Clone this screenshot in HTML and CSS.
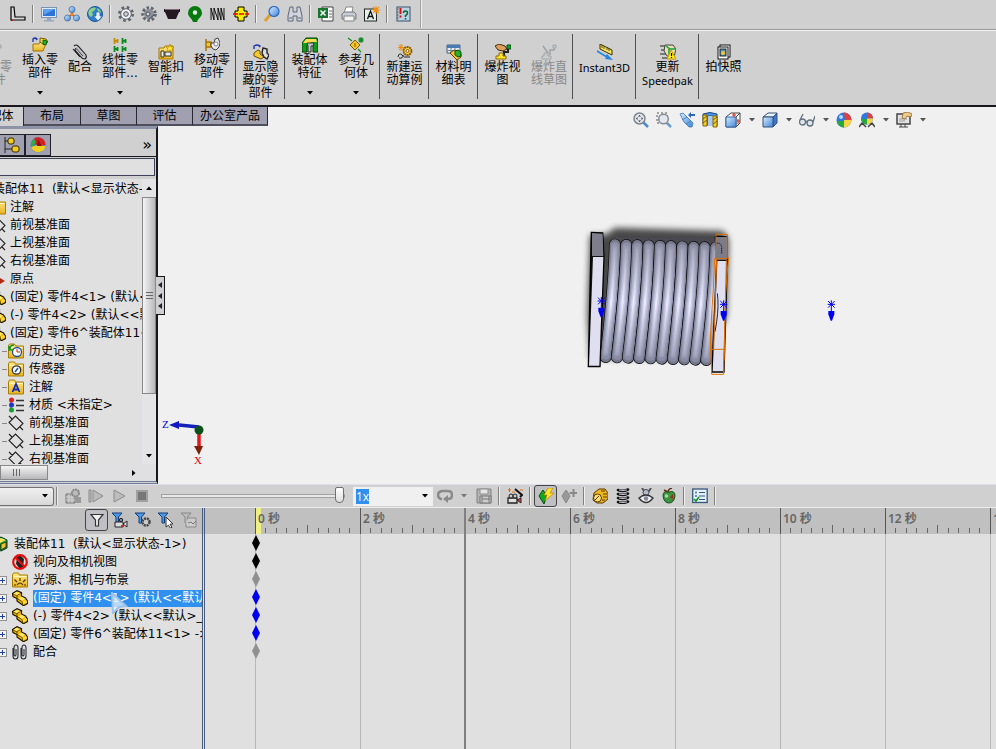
FILE: index.html
```html
<!DOCTYPE html>
<html lang="zh-CN">
<head>
<meta charset="utf-8">
<title>装配体11</title>
<link rel="stylesheet" href="styles.css">
</head>
<body>
<svg class="sprite" aria-hidden="true">
  <defs>
    <linearGradient id="gBlue" x1="0" y1="0" x2="1" y2="1"><stop offset="0" stop-color="#d8ecff"/><stop offset="1" stop-color="#3f84d6"/></linearGradient>
    <linearGradient id="gGold" x1="0" y1="0" x2="0" y2="1"><stop offset="0" stop-color="#ffe98a"/><stop offset="1" stop-color="#e8b420"/></linearGradient>
    <linearGradient id="gGray" x1="0" y1="0" x2="1" y2="1"><stop offset="0" stop-color="#fafafc"/><stop offset="1" stop-color="#8c9098"/></linearGradient>
  </defs>
  <symbol id="dot" viewBox="0 0 16 16"><path d="M7 3l3 2v4l-3 3H3V4z" fill="#000"/></symbol>
  <symbol id="ell" viewBox="0 0 16 16"><path d="M1 1h3l1 10h10v3H1z" fill="#d8d8d8" stroke="#000" stroke-width="1.2"/><path d="M1 14h2v1H1z" fill="#c00"/></symbol>
  <symbol id="monitor" viewBox="0 0 16 16"><rect x=".5" y="1.5" width="15" height="10" fill="#dfe9f7" stroke="#7c92b4"/><rect x="2" y="3" width="12" height="7" fill="#2a74d8"/><path d="M2 3h12L3 9z" fill="#5aa0f0"/><path d="M6 12h4v2H6zM3 14h10v1.500H3z" fill="#98a8c0"/></symbol>
  <symbol id="network" viewBox="0 0 16 16"><path d="M8 5v4M4 11l4-2 4 2" stroke="#444" fill="none"/><g fill="url(#gBlue)" stroke="#3c669c" stroke-width=".8"><circle cx="8" cy="3.500" r="3"/><circle cx="3.500" cy="12" r="3"/><circle cx="12.500" cy="12" r="3"/></g><circle cx="8" cy="8.500" r="1.800" fill="#f08020"/></symbol>
  <symbol id="globe" viewBox="0 0 16 16"><circle cx="8" cy="8" r="7.500" fill="#2e7fd0" stroke="#1a5596"/><path d="M2 4c3-3 6-3 7-2L7 5 5 6l1 3-2 2C1 9 1 7 2 4zM10 2c3 1 4 3 4 5l-3-1z" fill="#8cd080"/><path d="M9 6h4v4h2.500L11 15 6.500 10H9z" fill="#e8f2ff" stroke="#2b62b0" stroke-width=".8"/></symbol>
  <symbol id="gear" viewBox="0 0 16 16"><circle cx="8" cy="8" r="6.500" fill="none" stroke="#60666e" stroke-width="3" stroke-dasharray="2.500 2.600"/><circle cx="8" cy="8" r="5.300" fill="#eef0f2" stroke="#5e646c"/><circle cx="8" cy="8" r="2.300" fill="#d0d0d0" stroke="#50565e"/></symbol>
  <symbol id="geardark" viewBox="0 0 16 16"><circle cx="8" cy="8" r="6" fill="none" stroke="#60646c" stroke-width="3.500" stroke-dasharray="2.400 1.800"/><circle cx="8" cy="8" r="5" fill="#8c9099"/><circle cx="7" cy="8" r="2" fill="#d0d0d0" stroke="#50565e"/><path d="M8 13l5-4" stroke="#44485a"/></symbol>
  <symbol id="pulley" viewBox="0 0 16 16"><path d="M0 3h16v3h-1l-3 7H4L1 6H0z" fill="#221822"/><path d="M1 3h14v1H1z" fill="#806878"/></symbol>
  <symbol id="cam" viewBox="0 0 16 16"><path d="M8 0a7 7 0 0 1 7 7c0 4-4 5-5 9H6c-1-4-5-5-5-9a7 7 0 0 1 7-7z" fill="#067a0c"/><circle cx="8" cy="6.500" r="2.200" fill="#e8e8e8"/></symbol>
  <symbol id="spring" viewBox="0 0 16 16"><path d="M1 14V2l3 12V2l4 12V2l3 12V2l3 12V2" fill="none" stroke="#000" stroke-width=".9"/></symbol>
  <symbol id="cross" viewBox="0 0 16 16"><path d="M5 1h6v4h3v6h-3v4H5v-4H2V5h3z" fill="#f5ec00" stroke="#000"/><path d="M0 8h16" stroke="#e00" stroke-width="1.300" stroke-dasharray="5 1"/></symbol>
  <symbol id="lens" viewBox="0 0 16 16"><path d="M6 9l-5 6" stroke="#e0a030" stroke-width="3"/><circle cx="10" cy="5.500" r="5" fill="url(#gBlue)" stroke="#2b66c0" stroke-width="1.200"/></symbol>
  <symbol id="binoc" viewBox="0 0 16 16"><path d="M3 1h3v5h4V1h3l2 9v5h-5v-5H6v5H1v-5z" fill="#cfd4de" stroke="#5c6474"/><path d="M2 12h3m6 0h3" stroke="#5c6474"/></symbol>
  <symbol id="excel" viewBox="0 0 16 16"><path d="M4 1h11v14H4z" fill="#fff" stroke="#444"/><path d="M11 5h3m-3 3h3m-3 3h3" stroke="#666"/><rect x="0" y="2" width="10" height="10" fill="#16762e"/><path d="M2.500 4.500l5 5m0-5l-5 5" stroke="#fff" stroke-width="1.500"/></symbol>
  <symbol id="printer" viewBox="0 0 16 16"><path d="M5 1h7l-1 6H3z" fill="#fff" stroke="#888"/><path d="M1 8l2-2h10l2 2v5H1z" fill="#c9ccd4" stroke="#70747c"/><path d="M3 10h10v5H3z" fill="#f4f4f4" stroke="#888"/></symbol>
  <symbol id="note" viewBox="0 0 16 16"><rect x=".5" y="3" width="12" height="12" fill="#e4f0ec" stroke="#222"/><path d="M3.500 13l3-8 3 8M4.500 10.500h4" fill="none" stroke="#111" stroke-width="1.300"/><path d="M12 0v8M8 4h8M9 1l6 6m0-6L9 7" stroke="#f09010" stroke-width="1.200"/></symbol>
  <symbol id="help" viewBox="0 0 16 16"><rect x="2" y="1" width="13" height="14" fill="#b9d3e4" stroke="#3c5068"/><path d="M1 3h3M1 6h3M1 9h3M1 12h3" stroke="#777"/><path d="M5.500 2v6m0 1.500v2" stroke="#e01010" stroke-width="2"/><path d="M8.500 7q0-2 2-2t2 2-2 2.500V11m0 1v1.500" fill="none" stroke="#106030" stroke-width="1.500"/></symbol>
  <symbol id="part" viewBox="0 0 16 16"><path d="M.5 3.500L5 .7l4.500 2V6l4 2 2.300 3.500-.3 2-4 2.200L5 11V8.500l-4-2z" fill="#f2bc08" stroke="#1c1400" stroke-width="1.200"/><path d="M1.500 3.500L5 1.700l3.500 1.500L5 5.500z" fill="#ffe768"/><path d="M6.500 8.500l3-1.700 3.500 2L10 11z" fill="#ffe768"/><path d="M10.500 12l3.500-2 1 2-4 2.500z" fill="#ffd83a"/><path d="M5 5.500v3l5 3 1 4M5 5.500l3.500-2M1 4l4 2" fill="none" stroke="#4c3800" stroke-width=".8"/></symbol>
  <symbol id="gpart" viewBox="0 0 16 16"><path d="M1 7h6l1-2h5v4l-2 5H1z" fill="url(#gGold)" stroke="#a07000"/><path d="M8 1l6 1 2 3-4 3-4-3z" fill="#f4d83c" stroke="#775c00"/><path d="M11 3l4 1-1 4-3-1z" fill="#22b422" stroke="#0a600a"/><path d="M1 5V2q2-2 4 0l-1 1" fill="none" stroke="#1830b0" stroke-width="1.300"/></symbol>
  <symbol id="clip" viewBox="0 0 16 16"><path d="M2 2q2-2 4 0l8 9q1 3-1 4-2 0-3-1L3 6q0-2 2-1l6 7M1 5l7 8" fill="none" stroke="#1e1e22" stroke-width="1.100"/><path d="M4 3l9 10" stroke="#b0b4bc" stroke-width="1.200"/></symbol>
  <symbol id="pattern" viewBox="0 0 16 16"><path d="M2.500 1v6M2 4h4M5.500 2v4" stroke="#c88c00" stroke-width="1.800" fill="none"/><path d="M10.500 1v6m0-3h4m-1-2v4M2.500 9v6m0-3h4m-1-2v4M10.500 9v6m0-3h4m-1-2v4" stroke="#0c8c20" stroke-width="1.800" fill="none"/></symbol>
  <symbol id="smart" viewBox="0 0 16 16"><path d="M1 4h5l1-2h8v13H1z" fill="url(#gGold)" stroke="#a87800"/><path d="M3 7h3v6H3zM7 8h6v4H7z" fill="#e8ecf0" stroke="#333"/><path d="M12 0l1.200 3H16l-2 2 1 3-3-2-3 2 1-3-2-2h3z" fill="#ffe640" stroke="#b88000" stroke-width=".7"/></symbol>
  <symbol id="move" viewBox="0 0 16 16"><path d="M2 2v12M2 5h5v5H2" fill="#f6c52a" stroke="#a87400" stroke-width="1.500"/><path d="M7 6h3l1-4 3-1 2 5-1 4-3 3-3-1-2-3z" fill="#e8e8ec" stroke="#444"/><circle cx="12" cy="7" r="2" fill="#fff" stroke="#888"/></symbol>
  <symbol id="showhide" viewBox="0 0 16 16"><path d="M1 5V2q3-2 6 0l-1 1" fill="none" stroke="#1830b0" stroke-width="1.400"/><path d="M1 9l4-3 2 1v3l4 3-3 2-7-3z" fill="#f5cb30" stroke="#6a4c00"/><path d="M10 4l4 1v4l2 2-2 4-3-2-2-4z" fill="#ddd" stroke="#222" stroke-width="1.400"/></symbol>
  <symbol id="feature" viewBox="0 0 16 16"><path d="M0 6l4-5h11l1 3v11h-5V8H5v7H0z" fill="#149c1c" stroke="#043c04"/><path d="M1 6l3-4h10l1 3H9L8 6z" fill="#f8dd50"/><path d="M5 6h7l-1 3H9v6H6V9z" fill="#c0c4cc" stroke="#333"/></symbol>
  <symbol id="refgeo" viewBox="0 0 16 16"><path d="M7 3l5 5-5 5-5-5z" fill="#f5c626" stroke="#7d5a00"/><path d="M7 6v4" stroke="#7d5a00"/><path d="M0 1l4 3M10 12l3 3M13 0v6M10 3h6M11 1l4 4m0-4l-4 4" stroke="#0c8820" stroke-width="1.100"/></symbol>
  <symbol id="study" viewBox="0 0 16 16"><circle cx="10.500" cy="7" r="4" fill="#f8d450" stroke="#8a5800" stroke-width="1.800" stroke-dasharray="2 .5"/><circle cx="10.500" cy="7" r="1.500" fill="#fff" stroke="#8a5800"/><path d="M1 13q1-5 4-2t4 2l4 0M2 14q4 1 4-3" stroke="#222" fill="none"/><path d="M4 0v7M1 3.500h6M2 1l4 5m0-5L2 6" stroke="#f08a10"/></symbol>
  <symbol id="bom" viewBox="0 0 16 16"><path d="M1 1h13v8H1z" fill="#e8eef5" stroke="#466080"/><path d="M1 1h13v3H1z" fill="#457cb4"/><path d="M5 4v5m4-5v5M1 6.500h13" stroke="#6a86a4"/><path d="M4 9l4-3 4 2 3 2v3l-4 3z" fill="#f5c62e" stroke="#614400"/><path d="M9 7l3-1 3 2v4l-3 1-3-2z" fill="#2ab02a" stroke="#075007"/></symbol>
  <symbol id="explode" viewBox="0 0 16 16"><path d="M0 2l4-2 6 2 2 3-4 2-5-1z" fill="#dca060" stroke="#4c2800"/><path d="M12 1h4v4h-4z" fill="#14a428" stroke="#044c0c"/><path d="M13 5v3H9v4" stroke="#222" fill="none" stroke-width="2"/><path d="M4 9h4v3h3v3H1v-3h3z" fill="#ffe528" stroke="#8c6800"/></symbol>
  <symbol id="expline" viewBox="0 0 16 16"><path d="M2 2l5 7M13 2v4H9v5" stroke="#a0a4a8" stroke-width="1.600" fill="none"/><path d="M12 1h3v3h-3zM3 9h4v3h3v3H1v-3h2z" fill="#ccc" stroke="#a0a4a8"/></symbol>
  <symbol id="instant" viewBox="0 0 16 16"><path d="M3 0l12 6v5L3 5z" fill="#f6e460" stroke="#3c3000"/><path d="M5 1v3m2-2v3m3-2v3m2-2v3" stroke="#3c3000" stroke-width=".8"/><path d="M0 6l9 5.500 1-1.500 6 6-8-1 1-1.500L0 8z" fill="#2585e4"/></symbol>
  <symbol id="speed" viewBox="0 0 16 16"><path d="M0 2h7M1 6h6M0 10h6M2 14h5" stroke="#222"/><path d="M5 1h8l3 4-2 8-7-1-3-5z" fill="#e8dfb0" stroke="#444"/><path d="M6 2l4 3 5 0M9 5v6" stroke="#18a038" stroke-width="1.500" fill="none"/><path d="M11 6l5 9H7z" fill="#ffe820" stroke="#c79a00"/><path d="M11.500 9v3m0 1v1" stroke="#000" stroke-width="1.200"/></symbol>
  <symbol id="snapshot" viewBox="0 0 16 16"><rect x="4" y="1" width="10" height="12" fill="#fff" stroke="#111"/><rect x="2" y="3" width="10" height="12" fill="#fff" stroke="#111"/><rect x="4" y="5" width="6" height="7" fill="#5090c0" stroke="#222"/><circle cx="7" cy="9" r="2" fill="#f3c832"/></symbol>
  <symbol id="zoomfit" viewBox="0 0 16 16"><path d="M10 10l5 5" stroke="#4c8ad0" stroke-width="2.500"/><circle cx="6.500" cy="6.500" r="5.500" fill="#e0e6ec" stroke="#80868e" stroke-width="1.500"/><path d="M6.500 3l1.500 1.500H5zM6.500 10L8 8.500H5zM3 6.500L4.500 5v3zM10 6.500L8.500 5v3z" fill="#333"/></symbol>
  <symbol id="zoomarea" viewBox="0 0 16 16"><path d="M11 11l4 4" stroke="#6a9cd4" stroke-width="2.500"/><path d="M1 1h10v10H1z" fill="none" stroke="#555" stroke-dasharray="2 2"/><circle cx="7.500" cy="7" r="4.800" fill="#e4e8ee" stroke="#868c96" stroke-width="1.500"/></symbol>
  <symbol id="prev" viewBox="0 0 16 16"><path d="M1 2l3-1 10 10-1 4-3 0L5 10z" fill="url(#gBlue)" stroke="#3878b8" stroke-width=".8"/><path d="M3 8l5-3M7 12l5-3" stroke="#3878b8" stroke-width=".8"/><path d="M16 4h-4v2L9 3l3-3v2h4z" fill="#2b66c0"/></symbol>
  <symbol id="section" viewBox="0 0 16 16"><path d="M1 2q7-3 14 0v12l-4-1V4H6v9l-5-1z" fill="#4e95e0" stroke="#1b4a88"/><path d="M6 4h5v10H6z" fill="#a8ccf4"/><path d="M1 3h4v11H1zM11 4h4v11h-4z" fill="#f5cf2c" stroke="#8a6500"/><path d="M1 7l4-3M1 11l4-3M11 8l4-3M11 12l4-3" stroke="#5c4400" stroke-width=".8"/></symbol>
  <symbol id="orient" viewBox="0 0 16 16"><path d="M1 5l5-4h9v10l-4 4H1z" fill="#fff" stroke="#444"/><path d="M11 5l4-4M11 15V5" stroke="#444"/><path d="M1 5h10v10H1z" fill="url(#gBlue)" stroke="#3468a4"/><path d="M9 1v4M13 7v5M12 9h3M7 3h4" stroke="#d02020"/></symbol>
  <symbol id="cube" viewBox="0 0 16 16"><path d="M1 5l5-4h9l-4 4z" fill="#e9f2ff" stroke="#35507c"/><path d="M11 5l4-4v10l-4 4z" fill="#4076ce" stroke="#35507c"/><path d="M1 5h10v10H1z" fill="url(#gBlue)" stroke="#35507c"/></symbol>
  <symbol id="glasses" viewBox="0 0 16 16"><g fill="#dde6ee" stroke="#62707e" stroke-width="1.300"><circle cx="3.500" cy="10" r="3"/><circle cx="11" cy="11" r="3"/><path d="M1 8l3-6M6.500 10q1-1 2 0M14 10l2-6" fill="none"/></g></symbol>
  <symbol id="ball" viewBox="0 0 16 16"><circle cx="8" cy="8" r="7.500" fill="#2f78dc"/><path d="M8 .5A7.500 7.500 0 0 1 15.500 8H9z" fill="#e04040"/><path d="M15.500 8A7.500 7.500 0 0 1 8 15.500V8z" fill="#f4d648"/><path d="M.7 9H8v6.500A7.500 7.500 0 0 1 .7 9z" fill="#28a83c"/><circle cx="5" cy="5" r="2" fill="#b4d8ff"/></symbol>
  <symbol id="scene" viewBox="0 0 16 16"><path d="M0 15l3-4h10l3 4M3 11l4 4M13 11l-4 4" stroke="#444" fill="none" stroke-width="1.500"/><circle cx="8" cy="6.500" r="6" fill="#2f78dc"/><path d="M8 .5a6 6 0 0 1 6 6H9z" fill="#e04040"/><path d="M14 6.500a6 6 0 0 1-6 6v-6z" fill="#f4d648"/><path d="M2 7h6v5.500A6 6 0 0 1 2 7z" fill="#28a83c"/></symbol>
  <symbol id="view" viewBox="0 0 16 16"><path d="M1 2h13v10H1z" fill="#e4e4e4" stroke="#444" stroke-width="1.500"/><path d="M5 12v3M9 12v3M3 15h9" stroke="#444"/><path d="M3 7h8M3 9h6" stroke="#999"/><path d="M7 1l5-1 4 2-1 3-4-1-2 3-3-1z" fill="#f0cc88" stroke="#8c6430" stroke-width=".8"/></symbol>
  <symbol id="fm" viewBox="0 0 16 16"><path d="M1 0v16M1 4h4M1 12h7" stroke="#222" fill="none"/><rect x="4" y="1" width="6" height="6" rx="2" fill="#f4cc20" stroke="#332800"/><rect x="8" y="9" width="7" height="6" rx="2" fill="#f4cc20" stroke="#332800"/></symbol>
  <symbol id="display" viewBox="0 0 16 16"><circle cx="8" cy="8" r="7.500" fill="#3878d0"/><path d="M4 1.500A7.500 7.500 0 0 1 15.500 8L9 9 5 7z" fill="#d42020"/><path d="M1 10l6-2 8.500 1A7.500 7.500 0 0 1 1 10z" fill="#f0d020"/><path d="M4 2l2 3-3 4-2 1Q0 5 4 2z" fill="#30b040"/><path d="M8 2l2 4 2 3H7z" fill="#881010"/></symbol>
  <symbol id="folder" viewBox="0 0 16 16"><path d="M.5 3l1-2h5l1 2h8v12H.5z" fill="url(#gGold)" stroke="#a87c00"/><path d="M1.500 4.500h13" stroke="#fff6c0"/></symbol>
  <symbol id="history" viewBox="0 0 16 16"><use href="#folder"/><circle cx="9" cy="9" r="4.500" fill="#fff" stroke="#2450a0" stroke-width="1.300"/><path d="M9 6v3h3" fill="none" stroke="#d01818"/><path d="M2 6q0-4 4-4M1 3v4h4" fill="none" stroke="#109820" stroke-width="1.500"/></symbol>
  <symbol id="sensor" viewBox="0 0 16 16"><use href="#folder"/><circle cx="8.500" cy="9" r="4.200" fill="#fff" stroke="#333" stroke-width="1.300"/><path d="M7 11l3-4" stroke="#2450a0" stroke-width="1.500"/></symbol>
  <symbol id="annot" viewBox="0 0 16 16"><use href="#folder"/><path d="M4.500 13l3.500-8 3.500 8M6 10.500h4" fill="none" stroke="#1228b4" stroke-width="1.800"/></symbol>
  <symbol id="material" viewBox="0 0 16 16"><path d="M8 3.500h8M8 8.500h8M8 13.500h8" stroke="#333" stroke-width="1.500"/><path d="M3 5v9" stroke="#333"/><circle cx="3.500" cy="3" r="2.500" fill="#e02020"/><circle cx="3.500" cy="8" r="2.500" fill="#2038d0"/><circle cx="3.500" cy="13" r="2.500" fill="#18a030"/></symbol>
  <symbol id="plane" viewBox="0 0 16 16"><path d="M1 7.500L7.500 1 15 8.500 8.500 15zM1 1l3.500 3.500M11.500 11.500L15 15" fill="none" stroke="#222" stroke-width="1.100"/></symbol>
  <symbol id="origin" viewBox="0 0 16 16"><path d="M1 4v9h9" fill="none" stroke="#333"/><path d="M10 7l5 3-5 3z" fill="#b02810"/></symbol>
  <symbol id="asm" viewBox="0 0 16 16"><path d="M1 4l7-3 6 3v8l-6 3-7-3z" fill="#1aa428" stroke="#032"/><path d="M2 5l6-3 5 2-6 3z" fill="#ffe060"/><path d="M8 8l5-2v5l-5 3z" fill="#f4c22c" stroke="#432"/><path d="M2 6l5 2v5l-5-2z" fill="#fff" stroke="#044c10"/></symbol>
  <symbol id="noview" viewBox="0 0 16 16"><path d="M5 3l3-2 4 4-1 8-3 2-4-5z" fill="#222"/><circle cx="8" cy="8" r="6.800" fill="none" stroke="#e80c0c" stroke-width="2.200"/><path d="M3 3l10 10" stroke="#e80c0c" stroke-width="2.200"/></symbol>
  <symbol id="light" viewBox="0 0 16 16"><use href="#folder"/><path d="M5 13q3-4 6 0M8 9V6M5 10L2.500 7.500M11 10l2.500-2.500M4 13H2m10 0h2" fill="none" stroke="#4c3000" stroke-width="1.100"/></symbol>
  <symbol id="mates" viewBox="0 0 16 16"><path d="M1 4v8q0 3 2.500 3T6 12V4q0-3-2-3T2 4v7q1 2 2 0V5M9 4v8q0 3 2.500 3t2.500-3V4q0-3-2-3t-2 3v7q1 2 2 0V5" fill="none" stroke="#282c34" stroke-width="1.100"/></symbol>
  <symbol id="calc" viewBox="0 0 16 16"><path d="M1 6h9v9H1z" fill="#b0b0b0" stroke="#777"/><path d="M1 9h9M1 12h9M4 6v9M7 6v9" stroke="#ddd" stroke-width=".8"/><circle cx="10.500" cy="5" r="3.500" fill="#bbb" stroke="#858585" stroke-width="2" stroke-dasharray="2 .6"/><path d="M10 9h6v6h-6z" fill="#999"/></symbol>
  <symbol id="playstart" viewBox="0 0 16 16"><path d="M1 2h2v12H1zM5 2l10 6-10 6z" fill="#bcbcbc" stroke="#8c8c8c"/></symbol>
  <symbol id="play" viewBox="0 0 16 16"><path d="M3 2l11 6-11 6z" fill="#bcbcbc" stroke="#8c8c8c"/></symbol>
  <symbol id="stop" viewBox="0 0 16 16"><path d="M3 3h10v10H3z" fill="#777" stroke="#a0a0a0" stroke-width="2"/></symbol>
  <symbol id="loop" viewBox="0 0 16 16"><path d="M5 11H4q-3-1-3-4t4-4h6q4 0 4 4t-4 4h-1" fill="none" stroke="#8a8a8a" stroke-width="2.500"/><path d="M11 7v8l-5-4z" fill="#8a8a8a"/></symbol>
  <symbol id="save" viewBox="0 0 16 16"><path d="M1 1h14v14H1z" fill="#b4b4b4" stroke="#808080"/><path d="M4 1h8v5H4z" fill="#e4e4e4" stroke="#909090"/><path d="M4 8h11v7H4z" fill="#ccc" stroke="#777"/><path d="M6 8v7m7-7v7M6 11h8" stroke="#777"/></symbol>
  <symbol id="wizard" viewBox="0 0 16 16"><path d="M1 10h9v5H1z" fill="#e0e0e0" stroke="#222" stroke-width="1.300"/><circle cx="4" cy="8" r="2" fill="#ccc" stroke="#222"/><circle cx="8" cy="8" r="2" fill="#ccc" stroke="#222"/><path d="M10 12l4-2v5z" fill="#e04040" stroke="#222"/><path d="M8 1l7 6-2 2" stroke="#111" stroke-width="2" fill="none"/><path d="M1 2h3M2.500 0v4M5 4h3M13 2h3" stroke="#e06a10"/></symbol>
  <symbol id="autokey" viewBox="0 0 16 16"><path d="M5 2l4 6-3 8-5-8z" fill="#14a820" stroke="#045008"/><path d="M10 0h5l-3 5h4l-9 8 2-6H6z" fill="#ffe62e" stroke="#c08000" stroke-width=".7"/></symbol>
  <symbol id="addkey" viewBox="0 0 16 16"><path d="M5 2l4 6-4 7-4-7z" fill="#999" stroke="#888"/><path d="M12.500 1v8M8.500 5h8" stroke="#888" stroke-width="2"/></symbol>
  <symbol id="motor" viewBox="0 0 16 16"><path d="M2 5l5-4h6l3 4v6l-5 4H5l-4-3z" fill="#f0b820" stroke="#5a3800"/><circle cx="5.500" cy="10" r="4" fill="#fbe070" stroke="#5a3800"/><path d="M3 12l4-4M9 3l4 0M11 6l4 0M11 9l4 0M10 12l3 0" stroke="#5a3800"/></symbol>
  <symbol id="coil" viewBox="0 0 16 16"><path d="M3 2q5 2 10-.5M3 6q5 2 10-.5M3 10q5 2 10-.5M3 14q5 2 10-.5" stroke="#111" stroke-width="2.600" fill="none" stroke-linecap="round"/><path d="M4 2q4 1 8 0M4 6q4 1 8 0M4 10q4 1 8 0M4 14q4 1 8 0" stroke="#ccd" fill="none"/></symbol>
  <symbol id="contact" viewBox="0 0 16 16"><path d="M4 0l2 3h5l2-3" stroke="#555" stroke-width="2" fill="none"/><circle cx="8" cy="4.500" r="3" fill="#b4bcc8" stroke="#445"/><path d="M1 10q7-6 14 0-7 9-14 0z" fill="#f0f2f6" stroke="#333" stroke-width="1.300"/><circle cx="8" cy="10.500" r="2.300" fill="#889"/></symbol>
  <symbol id="gravity" viewBox="0 0 16 16"><path d="M8 4q6-2 6 4-1 7-6 7T2 8q0-6 6-4z" fill="#3c9440" stroke="#165018"/><path d="M7 4q0-3 4-4M3 2l4 2" stroke="#623010" stroke-width="1.500" fill="none"/><circle cx="5.500" cy="8" r="1.800" fill="#a8dca0"/><path d="M9 9l3-3v6z" fill="#a03020"/></symbol>
  <symbol id="props" viewBox="0 0 16 16"><rect x=".7" y="1" width="14.500" height="13.500" fill="#e4f0f8" stroke="#34587c" stroke-width="1.300"/><path d="M7 4.500h6M7 8h6M7 11.500h6" stroke="#34587c"/><path d="M3 3.500h2v2H3zM3 7h2v2H3z" fill="#6890b8"/><path d="M2 11l2 2 3-4" stroke="#109020" stroke-width="1.600" fill="none"/></symbol>
  <symbol id="funnel" viewBox="0 0 16 16"><path d="M2 2.500h12L9.500 8v6H6.500V8z" fill="#f2f2f2" stroke="#333" stroke-width="1.200"/></symbol>
  <symbol id="fblue" viewBox="0 0 16 16"><path d="M0 1h10L6.500 5v6H4V5z" fill="#4c98e8" stroke="#153c78"/></symbol>
  <symbol id="fcam" viewBox="0 0 16 16"><use href="#fblue"/><path d="M3 10h8v5H3zM11 12l4-3v6z" fill="#ddd" stroke="#222"/><circle cx="9" cy="8" r="1.700" fill="#888" stroke="#222"/><path d="M9 13h3v2H9z" fill="#d22"/></symbol>
  <symbol id="fgear" viewBox="0 0 16 16"><use href="#fblue"/><circle cx="11" cy="10" r="3.500" fill="#ccc" stroke="#444" stroke-width="2.500" stroke-dasharray="2 .8"/></symbol>
  <symbol id="fsel" viewBox="0 0 16 16"><use href="#fblue"/><path d="M8 5l7 7-3 .2 2 3-1.500 1-2-3L8 15z" fill="#fff" stroke="#333"/></symbol>
  <symbol id="fres" viewBox="0 0 16 16"><path d="M0 1h10L6.500 5v6H4V5z" fill="#bbb" stroke="#888"/><path d="M7 6h8v9H5v-3" fill="#ccc" stroke="#888"/><path d="M7 11l3-1 2 2 3-3" stroke="#777" fill="none"/></symbol>
  <symbol id="down" viewBox="0 0 8 4"><path d="M1 0h6L4 3.500z" fill="currentColor"/></symbol>
  <symbol id="key" viewBox="0 0 8 16"><path d="M4 0l4 8-4 8-4-8z" fill="currentColor"/></symbol>
</svg>

<div class="app">
  <nav class="topbar">
    <button class="tb lead" aria-label="草图"><svg><use href="#dot"/></svg></button>
    <button class="tb" aria-label="边线"><svg><use href="#ell"/></svg></button>
    <span class="sep"></span>
    <button class="tb" aria-label="显示"><svg><use href="#monitor"/></svg></button>
    <button class="tb" aria-label="网络"><svg><use href="#network"/></svg></button>
    <button class="tb" aria-label="下载"><svg><use href="#globe"/></svg></button>
    <span class="sep"></span>
    <button class="tb" aria-label="齿轮"><svg><use href="#gear"/></svg></button>
    <button class="tb" aria-label="链轮"><svg><use href="#geardark"/></svg></button>
    <button class="tb" aria-label="皮带轮"><svg><use href="#pulley"/></svg></button>
    <button class="tb" aria-label="凸轮"><svg><use href="#cam"/></svg></button>
    <button class="tb" aria-label="弹簧"><svg><use href="#spring"/></svg></button>
    <button class="tb" aria-label="型材"><svg><use href="#cross"/></svg></button>
    <span class="sep"></span>
    <button class="tb" aria-label="搜索"><svg><use href="#lens"/></svg></button>
    <button class="tb" aria-label="查找"><svg><use href="#binoc"/></svg></button>
    <span class="sep"></span>
    <button class="tb" aria-label="表格"><svg><use href="#excel"/></svg></button>
    <button class="tb" aria-label="打印"><svg><use href="#printer"/></svg></button>
    <button class="tb" aria-label="注释"><svg><use href="#note"/></svg></button>
    <span class="sep"></span>
    <button class="tb" aria-label="帮助"><svg><use href="#help"/></svg></button>
    <span class="topend"></span>
  </nav>

  <div class="ribbon">
    <div class="group first">
      <button class="rb off"><svg><use href="#expline"/></svg><span>编辑零<br>部件</span></button>
      <button class="rb drop"><svg><use href="#gpart"/></svg><span>插入零<br>部件</span><svg class="arr"><use href="#down"/></svg></button>
      <button class="rb slim"><svg><use href="#clip"/></svg><span>配合</span></button>
      <button class="rb drop"><svg><use href="#pattern"/></svg><span>线性零<br>部件...</span><svg class="arr"><use href="#down"/></svg></button>
      <button class="rb"><svg><use href="#smart"/></svg><span>智能扣<br>件</span></button>
      <button class="rb drop"><svg><use href="#move"/></svg><span>移动零<br>部件</span><svg class="arr"><use href="#down"/></svg></button>
    </div>
    <div class="group"><button class="rb wide"><svg><use href="#showhide"/></svg><span>显示隐<br>藏的零<br>部件</span></button></div>
    <div class="group">
      <button class="rb wide drop"><svg><use href="#feature"/></svg><span>装配体<br>特征</span><svg class="arr"><use href="#down"/></svg></button>
      <button class="rb drop"><svg><use href="#refgeo"/></svg><span>参考几<br>何体</span><svg class="arr"><use href="#down"/></svg></button>
    </div>
    <div class="group"><button class="rb wide"><svg><use href="#study"/></svg><span>新建运<br>动算例</span></button></div>
    <div class="group"><button class="rb wide"><svg><use href="#bom"/></svg><span>材料明<br>细表</span></button></div>
    <div class="group">
      <button class="rb wide"><svg><use href="#explode"/></svg><span>爆炸视<br>图</span></button>
      <button class="rb off"><svg><use href="#expline"/></svg><span>爆炸直<br>线草图</span></button>
    </div>
    <div class="group"><button class="rb big"><svg><use href="#instant"/></svg><span class="latin">Instant3D</span></button></div>
    <div class="group"><button class="rb big"><svg><use href="#speed"/></svg><span>更新</span><span class="latin">Speedpak</span></button></div>
    <div class="group last"><button class="rb wide"><svg><use href="#snapshot"/></svg><span>拍快照</span></button></div>
  </div>

  <main class="workspace">
    <div class="tabs">
      <button class="tab on">装配体</button><button class="tab">布局</button><button class="tab">草图</button><button class="tab">评估</button><button class="tab office">办公室产品</button>
    </div>
    <div class="hud">
      <button aria-label="整屏显示"><svg><use href="#zoomfit"/></svg></button>
      <button aria-label="局部放大"><svg><use href="#zoomarea"/></svg></button>
      <button aria-label="上一视图"><svg><use href="#prev"/></svg></button>
      <button aria-label="剖面视图"><svg><use href="#section"/></svg></button>
      <button class="more" aria-label="视图定向"><svg><use href="#orient"/></svg><svg class="arr"><use href="#down"/></svg></button>
      <button class="more" aria-label="显示样式"><svg><use href="#cube"/></svg><svg class="arr"><use href="#down"/></svg></button>
      <button class="more" aria-label="隐藏项目"><svg><use href="#glasses"/></svg><svg class="arr"><use href="#down"/></svg></button>
      <button aria-label="外观"><svg><use href="#ball"/></svg></button>
      <button class="more" aria-label="布景"><svg><use href="#scene"/></svg><svg class="arr"><use href="#down"/></svg></button>
      <button class="more" aria-label="视图设定"><svg><use href="#view"/></svg><svg class="arr"><use href="#down"/></svg></button>
    </div>
    <svg class="model" viewBox="0 0 870 510" role="img" aria-label="模型">
      <defs>
        <filter id="soft" x="-20%" y="-20%" width="140%" height="140%"><feGaussianBlur stdDeviation="10"/></filter>
        <linearGradient id="t1" gradientUnits="userSpaceOnUse" x1="0" y1="75" x2="0" y2="445"><stop offset="0" stop-color="#777a8c"/><stop offset=".5" stop-color="#9395ac"/><stop offset="1" stop-color="#74778a"/></linearGradient>
        <linearGradient id="t2" gradientUnits="userSpaceOnUse" x1="0" y1="75" x2="0" y2="445"><stop offset="0" stop-color="#8b8ea3"/><stop offset=".5" stop-color="#b5b8d4"/><stop offset="1" stop-color="#8588a0"/></linearGradient>
        <linearGradient id="t3" gradientUnits="userSpaceOnUse" x1="0" y1="75" x2="0" y2="445"><stop offset="0" stop-color="#9497ab"/><stop offset=".5" stop-color="#cdd0ec"/><stop offset="1" stop-color="#9396ae"/></linearGradient>
        <linearGradient id="t4" gradientUnits="userSpaceOnUse" x1="0" y1="75" x2="0" y2="445"><stop offset="0" stop-color="#9c9fb4"/><stop offset=".5" stop-color="#ececfc"/><stop offset="1" stop-color="#989bb2"/></linearGradient>
        <g id="turn" fill="none" stroke-linecap="round">
          <path d="M135 89Q132 220 107 426" stroke="#08080c" stroke-width="36"/>
          <path d="M135 89Q132 220 107 426" stroke="url(#t1)" stroke-width="32"/>
          <path d="M135 93Q132 220 107 422" stroke="url(#t2)" stroke-width="23"/>
          <path d="M134 98Q131 220 107 415" stroke="url(#t3)" stroke-width="14"/>
          <path d="M134 102Q131 220 107 410" stroke="url(#t4)" stroke-width="6"/>
        </g>
        <g id="mark" stroke="#0000f0" fill="#0000f0" stroke-width="3"><path d="M0-12v36M-10-10L10 10M10-10L-10 10M-11 0H11"/><path d="M-9 20H9V30L2 49H-2L-9 30z" stroke="none"/></g>
      </defs>
      <path d="M60 60L110 58 135 38 460 48 476 75 470 300 420 430 60 430 52 300z" fill="#000" opacity=".7" filter="url(#soft)"/>
      <path d="M128 66L440 68V110H125z" fill="#48484e"/>
      <use href="#turn"/><use href="#turn" x="34" y="1"/><use href="#turn" x="67" y="2"/><use href="#turn" x="101" y="3"/><use href="#turn" x="135" y="4"/><use href="#turn" x="168" y="5"/><use href="#turn" x="202" y="6"/><use href="#turn" x="236" y="7"/><use href="#turn" x="269" y="8"/><use href="#turn" x="302" y="9"/>
      <path d="M64 52l34 2 4 70-12 331H55z" fill="#111" stroke="#000" stroke-width="4"/>
      <path d="M66 54l32 2 2 67H66z" fill="#7e7d8c"/><path d="M69 126h31L88 452H57z" fill="#dfdff0"/>
      <path d="M436 64l36 2v70l-10 335h-36l14-330z" fill="#dfdff0" stroke="#000" stroke-width="4"/>
      <path d="M438 66h33v68h-33z" fill="#7c7c88"/><path d="M438 136h34" stroke="#111" stroke-width="4"/><path d="M440 84q15 0 15 15v18" fill="none" stroke="#111" stroke-width="3" stroke-dasharray="4 2"/>
      <path d="M442 235q5 35-2 85l-5 30" fill="none" stroke="#223" stroke-width="3"/>
      <path d="M438 58h34v73h-36zM434 130l-4 90-4 60-5 95 4 103h36l1-55 5-190 8-100M440 132l-9 270M424 403h38M475 126v12M469 136l-7 300" fill="none" stroke="#e07000" stroke-width="3"/>
      <use href="#mark" x="94" y="258"/><use href="#mark" x="461" y="268"/><use href="#mark" x="784" y="268"/>
    </svg>
    <svg class="triad" viewBox="0 0 50 50" role="img" aria-label="坐标轴">
      <path d="M37 12L17 10" stroke="#1420b8" stroke-width="3.500"/><path d="M7 10l10-4v8z" fill="#1018c8"/>
      <path d="M37 15v17" stroke="#e01818" stroke-width="3.500"/><path d="M32 31h9l-4 9z" fill="#7c2008"/><circle cx="37" cy="15" r="4.500" fill="#0c501c"/>
      <text x="0" y="13" class="az">Z</text><text x="32" y="49" class="ax">X</text>
    </svg>

    <section class="panel">
      <div class="ptabs">
        <button aria-label="设计树"><svg><use href="#fm"/></svg></button>
        <button aria-label="显示管理"><svg><use href="#display"/></svg></button>
        <span class="chev">»</span>
      </div>
      <input class="filter" type="text" aria-label="过滤">
      <div class="treebox">
        <ul class="tree">
          <li class="root">装配体11&nbsp; (默认&lt;显示状态-1&gt;)</li>
          <li><svg><use href="#folder"/></svg>注解</li>
          <li><svg><use href="#plane"/></svg>前视基准面</li>
          <li><svg><use href="#plane"/></svg>上视基准面</li>
          <li><svg><use href="#plane"/></svg>右视基准面</li>
          <li><svg><use href="#origin"/></svg>原点</li>
          <li><svg><use href="#part"/></svg>(固定) 零件4&lt;1&gt; (默认&lt;&lt;默认&gt;</li>
          <li><svg><use href="#part"/></svg>(-) 零件4&lt;2&gt; (默认&lt;&lt;默认&gt;</li>
          <li><svg><use href="#part"/></svg>(固定) 零件6^装配体11&lt;1&gt;</li>
          <li class="sub"><svg><use href="#history"/></svg>历史记录</li>
          <li class="sub"><svg><use href="#sensor"/></svg>传感器</li>
          <li class="sub"><svg><use href="#annot"/></svg>注解</li>
          <li class="sub"><svg><use href="#material"/></svg>材质 &lt;未指定&gt;</li>
          <li class="sub"><svg><use href="#plane"/></svg>前视基准面</li>
          <li class="sub"><svg><use href="#plane"/></svg>上视基准面</li>
          <li class="sub"><svg><use href="#plane"/></svg>右视基准面</li>
        </ul>
        <div class="vscroll"><svg class="arr up"><use href="#down"/></svg><div class="vthumb"><i></i></div><svg class="arr"><use href="#down"/></svg></div>
      </div>
      <div class="hscroll"><div class="hthumb"><i></i></div><svg class="arr right"><use href="#down"/></svg></div>
      <button class="handle" aria-label="折叠面板"><i></i><i></i><i></i></button>
    </section>
  </main>

  <section class="motion">
    <div class="mbar">
      <div class="combo study"><select aria-label="算例类型"><option></option></select><svg class="arr"><use href="#down"/></svg></div>
      <span class="sep"></span>
      <button class="tb" aria-label="计算"><svg><use href="#calc"/></svg></button>
      <button class="tb" aria-label="从头播放"><svg><use href="#playstart"/></svg></button>
      <button class="tb" aria-label="播放"><svg><use href="#play"/></svg></button>
      <button class="tb" aria-label="停止"><svg><use href="#stop"/></svg></button>
      <input class="slider" type="range" min="0" max="100" value="100" aria-label="时间">
      <div class="combo speed"><input type="text" value="1x" size="2" aria-label="播放速度"><svg class="arr"><use href="#down"/></svg></div>
      <button class="tb" aria-label="循环"><svg><use href="#loop"/></svg></button>
      <button class="tb mini" aria-label="循环选项"><svg class="arr"><use href="#down"/></svg></button>
      <button class="tb" aria-label="保存动画"><svg><use href="#save"/></svg></button>
      <span class="sep"></span>
      <button class="tb" aria-label="动画向导"><svg><use href="#wizard"/></svg></button>
      <span class="sep"></span>
      <button class="tb pressed" aria-label="自动键码"><svg><use href="#autokey"/></svg></button>
      <button class="tb" aria-label="添加键码"><svg><use href="#addkey"/></svg></button>
      <span class="sep"></span>
      <button class="tb" aria-label="马达"><svg><use href="#motor"/></svg></button>
      <button class="tb" aria-label="弹簧力"><svg><use href="#coil"/></svg></button>
      <button class="tb" aria-label="接触"><svg><use href="#contact"/></svg></button>
      <button class="tb" aria-label="引力"><svg><use href="#gravity"/></svg></button>
      <span class="sep"></span>
      <button class="tb" aria-label="属性"><svg><use href="#props"/></svg></button>
      <span class="sep"></span>
    </div>
    <div class="mbody">
      <div class="mtree">
        <div class="filters">
          <button class="tb pressed" aria-label="无过滤"><svg><use href="#funnel"/></svg></button>
          <button class="tb" aria-label="过滤动画"><svg><use href="#fcam"/></svg></button>
          <button class="tb" aria-label="过滤驱动"><svg><use href="#fgear"/></svg></button>
          <button class="tb" aria-label="过滤选定"><svg><use href="#fsel"/></svg></button>
          <button class="tb" aria-label="过滤结果"><svg><use href="#fres"/></svg></button>
        </div>
        <ul class="tree mlist">
          <li class="root"><svg><use href="#asm"/></svg>装配体11&nbsp; (默认&lt;显示状态-1&gt;)</li>
          <li><i class="ex none"></i><svg><use href="#noview"/></svg><span>视向及相机视图</span></li>
          <li><i class="ex"></i><svg><use href="#light"/></svg><span>光源、相机与布景</span></li>
          <li><i class="ex"></i><svg><use href="#part"/></svg><span class="sel">(固定) 零件4&lt;1&gt; (默认&lt;&lt;默认&gt;</span></li>
          <li><i class="ex"></i><svg><use href="#part"/></svg><span>(-) 零件4&lt;2&gt; (默认&lt;&lt;默认&gt;_显</span></li>
          <li><i class="ex"></i><svg><use href="#part"/></svg><span>(固定) 零件6^装配体11&lt;1&gt; -&gt;</span></li>
          <li><i class="ex"></i><svg><use href="#mates"/></svg><span>配合</span></li>
        </ul>
        <svg class="cursor" viewBox="0 0 18 22" aria-hidden="true"><path d="M2 1l14 13-7 1-6 6z" fill="#e4f2ff" fill-opacity=".75" stroke="#9cc4ea" stroke-width="2"/></svg>
      </div>
      <div class="timeline">
        <div class="cols">
          <div class="col now"><div class="rule"><span>0 秒</span></div></div>
          <div class="col"><div class="rule"><span>2 秒</span></div></div>
          <div class="col end"><div class="rule"><span>4 秒</span></div></div>
          <div class="col"><div class="rule"><span>6 秒</span></div></div>
          <div class="col"><div class="rule"><span>8 秒</span></div></div>
          <div class="col"><div class="rule"><span>10 秒</span></div></div>
          <div class="col"><div class="rule"><span>12 秒</span></div></div>
          <div class="col"><div class="rule"><span>14 秒</span></div></div>
        </div>
        <div class="keys">
          <svg class="k"><use href="#key"/></svg><svg class="k"><use href="#key"/></svg><svg class="g"><use href="#key"/></svg><svg class="b"><use href="#key"/></svg><svg class="b"><use href="#key"/></svg><svg class="b"><use href="#key"/></svg><svg class="g"><use href="#key"/></svg>
        </div>
      </div>
    </div>
  </section>
</div>
</body>
</html>
```
FILE: styles.css
```css
* { box-sizing: border-box; }
body {
  margin: 0;
  font: 12px/18px "DejaVu Sans", "Noto Sans CJK SC", sans-serif;
  color: #000;
  background: #d0d0d0;
}
button, input, select { font: inherit; color: inherit; margin: 0; padding: 0; border: 0; background: none; }
svg { width: 16px; height: 16px; flex: none; display: block; }
svg.arr { width: 8px; height: 4px; }
.sprite { position: absolute; width: 0; height: 0; }
.app { height: 100vh; display: flex; flex-direction: column; overflow: hidden; }

.topbar { display: flex; align-items: center; height: 30px; padding-bottom: 1px; border-bottom: 1px solid #989898; overflow: hidden; flex: none; }
.tb { width: 23px; height: 22px; display: flex; align-items: center; justify-content: center; flex: none; }
.tb.lead { margin-left: -17px; }
.sep { width: 2px; height: 18px; margin: 0 3px; background: #808080; border-right: 1px solid #f0f0f0; flex: none; }
.topend { align-self: stretch; width: 2px; margin-left: 6px; background: #a0a0a0; border-right: 1px solid #f0f0f0; }

.ribbon { display: flex; height: 77px; padding: 3px 0 6px; border-top: 1px solid #f4f4f4; border-bottom: 2px solid #18181c; flex: none; }
.group { display: flex; align-items: flex-start; border-right: 1px solid #505050; margin-right: 1px; flex: none; }
.group.first { margin-left: -29px; }
.group.last { border: 0; }
.rb { width: 46px; padding-top: 10px; display: flex; flex-direction: column; align-items: center; line-height: 13px; white-space: nowrap; flex: none; }
.rb.drop { padding-top: 3px; }
.rb.slim { width: 34px; }
.rb.wide { width: 47px; }
.rb.big { width: 61px; }
.rb span { padding-top: 1px; }
.rb span + span { padding-top: 0; }
.rb .arr { margin-top: 11px; }
.rb.off { color: #888; }
.latin { font: 11px/13px "Noto Sans", sans-serif; }

.workspace { position: relative; flex: 1; min-height: 0; display: flex; flex-direction: column; align-items: flex-start; background: #f0f0f0; }
.tabs { display: flex; height: 19px; flex: none; }
.tab { width: 56px; background: #a0a0b0; border-right: 1px solid #282830; border-bottom: 2px solid #50505c; line-height: 14px; flex: none; }
.tab.on { width: 56px; margin-left: -32px; background: #d0d0d0; border-bottom: 0; padding-bottom: 2px; }
.tab.on + .tab { width: 57px; }
.tab.office { width: 75px; }
.hud { position: absolute; left: 633px; top: 4px; display: flex; gap: 7px; }
.hud button { display: flex; align-items: center; height: 17px; color: #555; }
.hud .more { gap: 7px; }
.hud .more + button { margin-left: -1px; }
.model { position: absolute; left: 570px; top: 108px; width: 290px; height: 170px; }
.triad { position: absolute; left: 162px; top: 308px; width: 50px; height: 50px; overflow: visible; }
.triad text { font: 11px "Liberation Serif", serif; }
.az { fill: #0000e0; }
.ax { fill: #e00000; }

.panel { position: relative; width: 158px; flex: 1; min-height: 0; display: flex; flex-direction: column; background: #d0d0d0; border-top: 3px solid #8e93a8; border-right: 2px solid #18181c; border-bottom: 3px double #707c98; }
.ptabs { display: flex; height: 28px; align-items: flex-end; border-bottom: 1px solid #18181c; flex: none; }
.ptabs button { width: 26px; height: 22px; background: #a0a0b0; border: 1px solid #20202a; display: flex; align-items: center; justify-content: center; }
.ptabs button:first-child { width: 25px; border-left: 0; }
.ptabs .chev { margin-left: auto; padding: 0 4px 2px 0; font-size: 16px; }
.filter { width: 155px; height: 18px; margin: 1px 0 3px; background: #e0e0e0; border: 1px solid #404058; border-left: 0; flex: none; }
.treebox { display: flex; flex: 1; min-height: 0; background: #e0e0e0; }
.tree { list-style: none; margin: 0; padding: 1px 0 0; flex: 1; min-width: 0; overflow: hidden; }
.tree li { display: flex; align-items: center; height: 18px; white-space: nowrap; }
.panel .tree li { margin-left: -10px; gap: 4px; }
.panel .tree li.sub { margin-left: 0; gap: 5px; padding-left: 8px; background: linear-gradient(#888, #888) 2px 9px / 5px 1px no-repeat; }
.panel .tree li.root { margin-left: -7px; }
.vscroll { width: 14px; display: flex; flex-direction: column; align-items: center; justify-content: space-between; padding: 7px 0 6px; background: #e4e4e6; flex: none; }
.vthumb { width: 14px; height: 197px; margin: 7px 0 auto; display: flex; align-items: center; justify-content: center; border: 1px solid #888; background: linear-gradient(90deg, #f4f4f4, #b8b8bc); }
.vthumb i { width: 7px; height: 8px; background: repeating-linear-gradient(#666 0 1px, transparent 1px 3px); }
.up { transform: rotate(180deg); }
.hscroll { display: flex; align-items: center; justify-content: space-between; height: 17px; padding-right: 18px; background: #e0e0e2; flex: none; }
.hthumb { width: 48px; height: 15px; display: flex; align-items: center; padding-left: 12px; border: 1px solid #888; background: linear-gradient(#f4f4f4, #b8b8bc); }
.hthumb i { width: 8px; height: 7px; background: repeating-linear-gradient(90deg, #666 0 1px, transparent 1px 3px); }
.right { transform: rotate(-90deg); }
.handle { position: absolute; left: 156px; top: 147px; width: 9px; height: 39px; display: flex; flex-direction: column; align-items: center; justify-content: space-evenly; background: #d0d0d0; border: 1px solid #18181c; border-left: 0; }
.handle i { border: 3px solid transparent; border-left: 0; border-right: 4px solid #222; }

.motion { height: 265px; display: flex; flex-direction: column; flex: none; border-top: 1px solid #e0e0ec; }
.mbar { display: flex; align-items: center; height: 23px; border-bottom: 1px solid #ececec; flex: none; }
.combo { position: relative; display: flex; align-items: center; justify-content: space-between; height: 19px; padding-right: 4px; }
.study { width: 54px; border: 1px solid #707070; border-left: 0; border-radius: 0 3px 3px 0; background: linear-gradient(#f0f0f0, #d8d8d8); }
.study select { appearance: none; flex: 1; min-width: 0; height: 17px; }
.mbar .sep { margin: 0 3px; }
.mbar .study + .sep { margin: 0 3px 0 2px; }
.slider { appearance: none; width: 184px; height: 18px; margin: 0 8px; }
.slider::-webkit-slider-runnable-track { height: 4px; background: #e8e8e8; border: 1px solid #a0a0a0; }
.slider::-webkit-slider-thumb { appearance: none; width: 9px; height: 16px; margin-top: -8px; border: 1px solid #707070; border-radius: 2px 2px 4px 4px; background: linear-gradient(#fff, #ddd); }
.speed { width: 80px; background: #f0f0f0; padding-left: 3px; }
.speed input { width: 13px; height: 15px; background: #3090f0; color: #fff; font: 12px "Open Sans", sans-serif; }
.mbar .mini { width: 16px; color: #777; }
.pressed { border: 1px solid #444; border-radius: 3px; background: #c0c0c4; }
.mbody { display: flex; flex: 1; min-height: 0; }
.mtree { position: relative; width: 202px; display: flex; flex-direction: column; background: #e0e0e0; flex: none; }
.filters { display: flex; justify-content: flex-end; align-items: center; height: 26px; padding: 0 2px 3px 0; background: #c0c0c0; flex: none; }
.mlist li { gap: 5px; }
.mlist li.root { margin-left: -7px; }
.ex { width: 7px; height: 9px; border: 1px solid #909090; border-left: 0; background: linear-gradient(#2040a0, #2040a0) 0 3px / 5px 1px no-repeat, linear-gradient(#2040a0, #2040a0) 2px 1px / 1px 5px no-repeat, #f4f4f4; flex: none; }
.ex.none { border: 0; background: none; }
.mlist span { flex: 1; overflow: hidden; line-height: 17px; }
.sel { background: #3090f0; color: #fff; }
.cursor { position: absolute; left: 110px; top: 84px; width: 18px; height: 22px; }
.timeline { position: relative; flex: 1; min-width: 0; border-left: 3px double #485c80; background: linear-gradient(#c0c0c0 26px, #e0e0e0 26px); }
.cols { display: flex; height: 100%; padding-left: 50px; overflow: hidden; }
.col { width: 105px; border-left: 1px solid #b8b8b8; flex: none; }
.rule {
  height: 26px; margin-left: -1px; padding: 2px 0 0 2px; border-left: 1px solid #555;
  font: 600 12px/18px "Noto Sans", "Noto Sans CJK SC", sans-serif; color: #666;
  background:
    linear-gradient(#666, #666) 51px 17px / 1px 8px no-repeat,
    repeating-linear-gradient(90deg, transparent 0 9px, #666 9px 10px, transparent 10px 20px, #666 20px 21px) 0 20px / 103px 5px no-repeat;
}
.now .rule { background: linear-gradient(#f0f080, #f0f080) 0 0 / 5px 26px no-repeat, linear-gradient(#666, #666) 51px 17px / 1px 8px no-repeat, repeating-linear-gradient(90deg, transparent 0 9px, #666 9px 10px, transparent 10px 20px, #666 20px 21px) 0 20px / 103px 5px no-repeat; }
.end { border-left: 2px solid #808080; margin-left: -1px; width: 106px; }
.end .rule { border-left: 0; margin-left: 0; }
.keys { position: absolute; left: 47px; top: 26px; display: flex; flex-direction: column; gap: 2px; padding-top: 1px; }
.keys svg { width: 8px; height: 16px; }
.k { color: #000; }
.g { color: #909090; }
.b { color: #0000f0; }
```
